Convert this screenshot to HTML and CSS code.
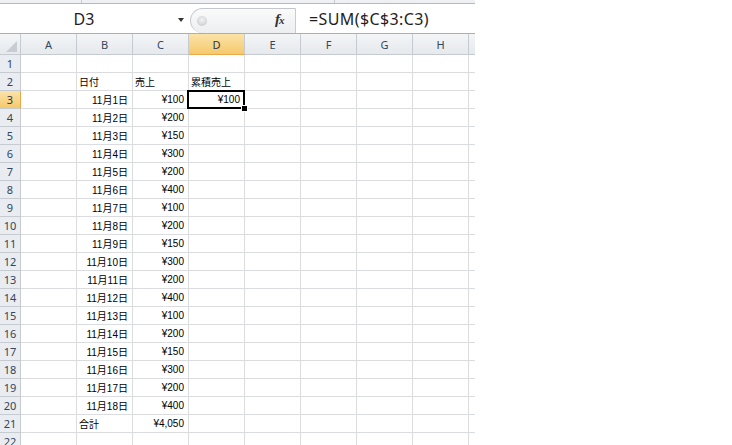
FILE: index.html
```html
<!DOCTYPE html>
<html lang="ja">
<head>
<meta charset="utf-8">
<title>Book1</title>
<link rel="stylesheet" href="styles.css">
</head>
<body>
<div class="app">
  <div class="ribbon-edge">
    <span class="seg seg-a"></span>
    <span class="seg seg-b"></span>
  </div>
  <div class="formula-bar">
    <div class="name-box">
      <span class="name">D3</span>
      <span class="caret"></span>
    </div>
    <div class="fx-zone">
      <span class="grip"></span>
      <span class="fx"><i class="f">f</i><i class="x">x</i></span>
    </div>
    <div class="formula">=SUM($C$3:C3)</div>
  </div>
  <div class="sheet" id="sheet">
    <div class="hd corner"><svg width="11" height="11" viewBox="0 0 11 11"><polygon points="11,0 11,11 0,11" fill="#c9cdd3"/></svg></div>
    <div class="hd col">A</div>
    <div class="hd col">B</div>
    <div class="hd col">C</div>
    <div class="hd col active">D</div>
    <div class="hd col">E</div>
    <div class="hd col">F</div>
    <div class="hd col">G</div>
    <div class="hd col">H</div>
    <div class="hd col stub"></div>
  </div>
</div>
<script src="sheet.js"></script>
</body>
</html>
```

FILE: sheet.js
```js
// Build the worksheet body: 22 rows x (row header + A..H + partial column)
(function () {
  var sheet = document.getElementById('sheet');
  var sales = [100, 200, 150, 300, 200, 400, 100, 200, 150, 300, 200, 400, 100, 200, 150, 300, 200, 400];
  var data = {};
  data[2] = { B: ['日付', 'l'], C: ['売上', 'l'], D: ['累積売上', 'l'] };
  sales.forEach(function (v, i) {
    var r = i + 3;
    data[r] = { B: ['11月' + (i + 1) + '日', 'r'], C: ['¥' + v, 'r'] };
  });
  data[3].D = ['¥100', 'r'];
  data[21] = { B: ['合計', 'l'], C: ['¥4,050', 'r'] };

  var cols = ['A', 'B', 'C', 'D', 'E', 'F', 'G', 'H'];
  for (var r = 1; r <= 22; r++) {
    var rh = document.createElement('div');
    rh.className = 'hd row' + (r === 3 ? ' active' : '');
    rh.textContent = r;
    sheet.appendChild(rh);
    cols.forEach(function (c) {
      var cell = document.createElement('div');
      cell.className = 'cell';
      var d = data[r] && data[r][c];
      if (d) {
        cell.textContent = d[0];
        if (d[1] === 'r') cell.className += ' num';
      }
      if (r === 3 && c === 'D') cell.className += ' selected';
      sheet.appendChild(cell);
    });
    var stub = document.createElement('div');
    stub.className = 'cell stub';
    sheet.appendChild(stub);
  }
})();
```

FILE: styles.css
```css
html, body {
  margin: 0;
  padding: 0;
  background: #ffffff;
}

.app {
  width: 475px;
  height: 445px;
  overflow: hidden;
  font-family: "Noto Sans", "Liberation Sans", sans-serif;
}

/* thin strip left over from the ribbon */
.ribbon-edge {
  display: flex;
  height: 3px;
  background: #eef0f3;
  border-bottom: 1px solid #b4b9bf;
}
.seg {
  display: block;
  height: 3px;
  border-right: 1px solid #c8ccd1;
}
.seg-a { width: 81px; }
.seg-b { width: 252px; }

/* name box + formula input */
.formula-bar {
  display: flex;
  height: 29px;
  border-bottom: 1px solid #a9afb7;
  background: #ffffff;
}

.name-box {
  width: 190px;
  display: flex;
  align-items: center;
  position: relative;
}
.name {
  width: 168px;
  text-align: center;
  font-size: 16px;
  color: #1e1e1e;
}
.caret {
  margin-left: 10px;
  width: 0;
  height: 0;
  border-left: 3.5px solid transparent;
  border-right: 3.5px solid transparent;
  border-top: 4px solid #333;
  margin-top: 2px;
}

.fx-zone {
  width: 106px;
  margin-top: 4px;
  box-sizing: border-box;
  border: 1px solid #c3c7cc;
  border-right: 1px solid #c8ccd2;
  border-bottom: none;
  border-radius: 13px 0 0 13px;
  background: linear-gradient(#fafafa, #eceef0);
  display: flex;
  align-items: center;
  position: relative;
}
.grip {
  width: 10px;
  height: 10px;
  margin-left: 6px;
  border-radius: 50%;
  background: radial-gradient(circle at 50% 40%, #f4f4f4 0, #d8d9db 55%, #bcbec2 100%);
}
.fx {
  margin-left: 68px;
  margin-top: -3px;
  font-family: "Liberation Serif", serif;
  font-size: 15px;
  color: #333;
  font-weight: bold;
  letter-spacing: -1px;
}
.fx .x {
  font-size: 11px;
}

.formula {
  flex: 1;
  padding-left: 13px;
  display: flex;
  align-items: center;
  font-size: 16px;
  letter-spacing: 0.4px;
  color: #1e1e1e;
}

/* grid */
.sheet {
  display: grid;
  grid-template-columns: 21px repeat(8, 56px) 6px;
  grid-template-rows: 21px;
  grid-auto-rows: 18px;
}

.hd {
  box-sizing: border-box;
  background: linear-gradient(#f3f5f7, #e6e9ed);
  border-right: 1px solid #c6cbd1;
  border-bottom: 1px solid #c6cbd1;
  color: #33465c;
  font-size: 11px;
  display: flex;
  align-items: center;
  justify-content: center;
}
.hd.corner {
  align-items: flex-end;
  justify-content: flex-end;
  padding: 0 3px 2px 0;
}
.hd.corner svg { display: block; }
.hd.row {
  background: #e9ecf0;
  font-size: 11px;
}
.hd.active {
  background: linear-gradient(#fbe3a9, #f5c96c);
  border-bottom-color: #e9a94a;
  color: #26384c;
}
.hd.row.active {
  border-right-color: #e9a94a;
  border-bottom-color: #c6cbd1;
}
.hd.stub {
  border-right: none;
}

.cell {
  box-sizing: border-box;
  border-right: 1px solid #dadcdf;
  border-bottom: 1px solid #dadcdf;
  padding: 0 3px 0 2px;
  display: flex;
  align-items: center;
  white-space: nowrap;
  font-family: "Liberation Sans", "Noto Sans CJK JP", sans-serif;
  font-size: 10px;
  color: #000;
  position: relative;
}
.cell.num {
  justify-content: flex-end;
  padding-right: 4px;
}
.cell.stub {
  border-right: none;
}

/* active cell outline with the fill handle */
.cell.selected::after {
  content: "";
  position: absolute;
  top: -1px;
  left: -2px;
  right: -1px;
  bottom: -1px;
  border: 2px solid #000;
}
.cell.selected::before {
  content: "";
  position: absolute;
  right: -4px;
  bottom: -4px;
  width: 5px;
  height: 5px;
  background: #000;
  border: 1px solid #fff;
  z-index: 2;
}
```
